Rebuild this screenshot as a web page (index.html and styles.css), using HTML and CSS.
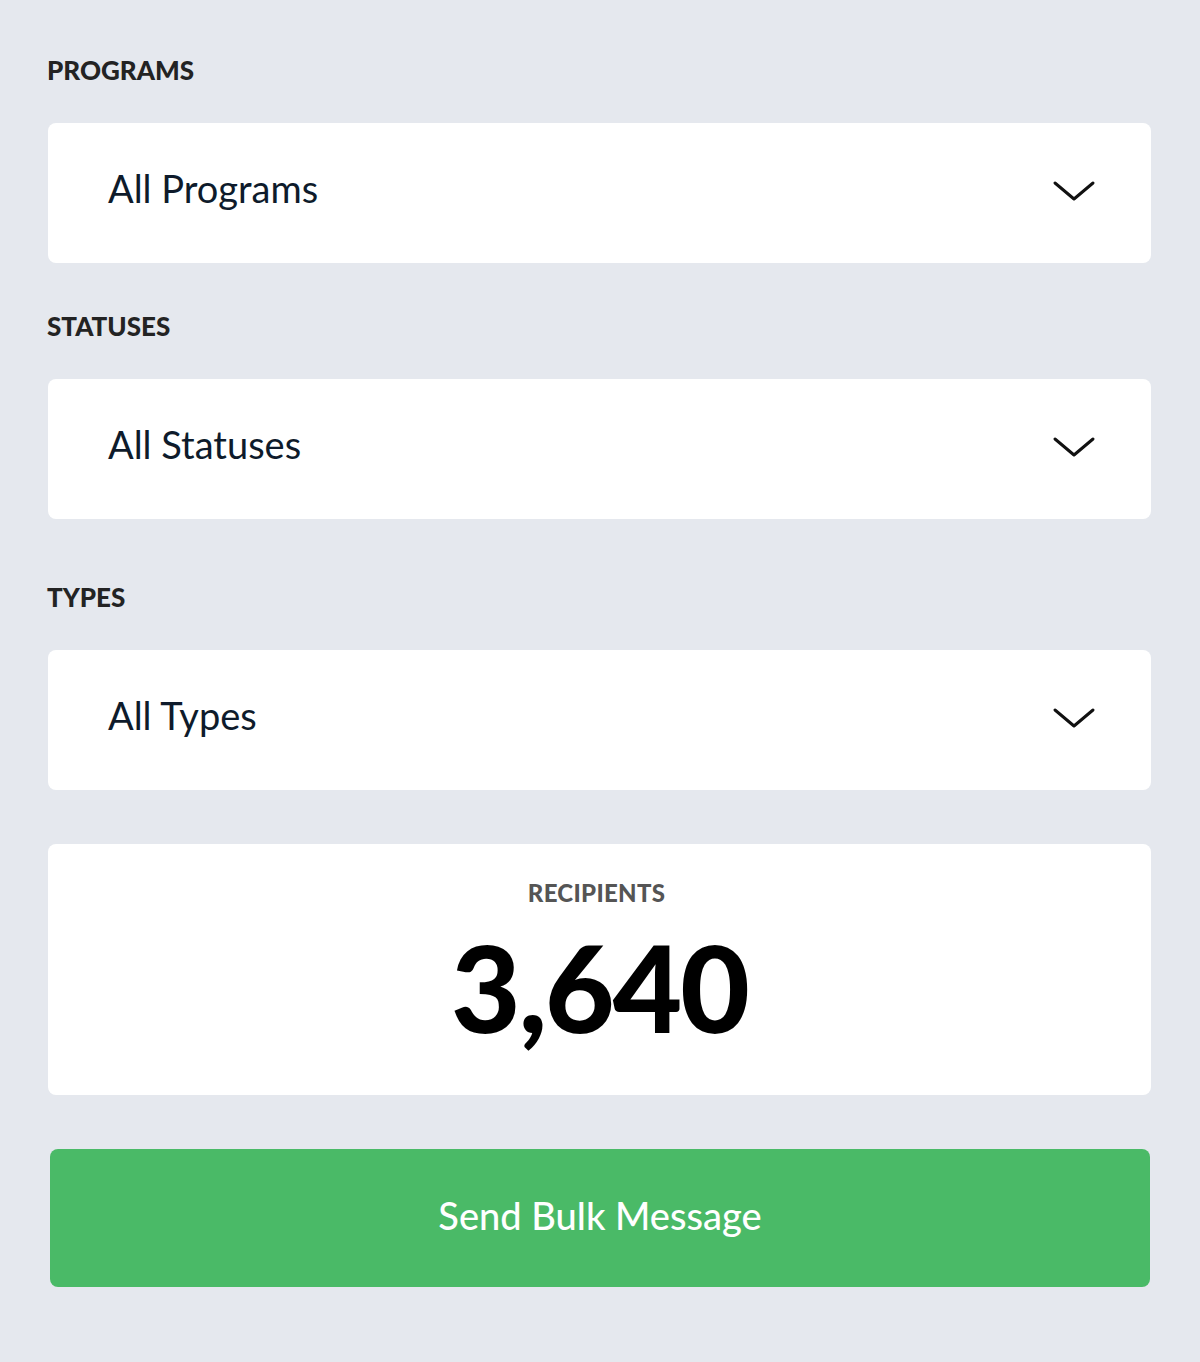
FILE: index.html
```html
<!DOCTYPE html>
<html lang="en">
<head>
<meta charset="utf-8">
<title>Bulk Message</title>
<link rel="stylesheet" href="styles.css">
</head>
<body>
<main class="panel">
  <section class="field field-programs">
    <div class="label">PROGRAMS</div>
    <div class="select">
      <span class="select-text">All Programs</span>
      <svg class="chevron" width="44" height="22" viewBox="0 0 44 22"><polyline points="3,3 22,19 41,3" fill="none" stroke="#111" stroke-width="3" stroke-linecap="round" stroke-linejoin="round"/></svg>
    </div>
  </section>
  <section class="field field-statuses">
    <div class="label">STATUSES</div>
    <div class="select">
      <span class="select-text">All Statuses</span>
      <svg class="chevron" width="44" height="22" viewBox="0 0 44 22"><polyline points="3,3 22,19 41,3" fill="none" stroke="#111" stroke-width="3" stroke-linecap="round" stroke-linejoin="round"/></svg>
    </div>
  </section>
  <section class="field field-types">
    <div class="label">TYPES</div>
    <div class="select">
      <span class="select-text">All Types</span>
      <svg class="chevron" width="44" height="22" viewBox="0 0 44 22"><polyline points="3,3 22,19 41,3" fill="none" stroke="#111" stroke-width="3" stroke-linecap="round" stroke-linejoin="round"/></svg>
    </div>
  </section>
  <section class="recipients">
    <div class="recipients-label">RECIPIENTS</div>
    <div class="recipients-count">3,640</div>
  </section>
  <button class="send-btn" type="button">Send Bulk Message</button>
</main>
</body>
</html>
```

FILE: styles.css
```css
* { box-sizing: border-box; }
html, body { margin: 0; padding: 0; }
body {
  background: #e5e8ee;
  font-family: Lato, "Open Sans", "Liberation Sans", sans-serif;
  width: 1200px;
  height: 1362px;
}
.panel {
  padding: 57px 49px 0 48px;
  display: flex;
  flex-direction: column;
}
.field-statuses { margin-top: 50px; }
.field-types { margin-top: 65px; }
.label {
  font-size: 26px;
  line-height: 26px;
  font-weight: 900;
  color: #232323;
  margin-left: -1px;
}
.select {
  margin-top: 40px;
  height: 140px;
  background: #ffffff;
  border-radius: 8px;
  display: flex;
  align-items: center;
  justify-content: space-between;
  padding: 0 57px 10px 60px;
}
.select-text {
  font-size: 38px;
  line-height: 38px;
  color: #0e1b2b;
  font-weight: 400;
}
.chevron { margin-top: 5px; margin-right: -2px; }
.recipients {
  margin-top: 54px;
  height: 251px;
  background: #ffffff;
  border-radius: 8px;
  display: flex;
  flex-direction: column;
  align-items: center;
  padding-top: 37px;
}
.recipients-label {
  font-size: 24px;
  line-height: 24px;
  font-weight: 900;
  color: #555555;
  letter-spacing: 0.3px;
  margin-left: -6px;
}
.recipients-count {
  margin-top: 22px;
  font-size: 120px;
  line-height: 120px;
  font-weight: 900;
  color: #000;
  letter-spacing: -2px;
}
.send-btn {
  margin: 54px 1px 0 2px;
  height: 138px;
  border: none;
  border-radius: 8px;
  background: #4aba67;
  color: #ffffff;
  font-family: Lato, "Open Sans", "Liberation Sans", sans-serif;
  font-size: 38px;
  font-weight: 500;
  padding: 0 0 6px 0;
  cursor: pointer;
}
```
